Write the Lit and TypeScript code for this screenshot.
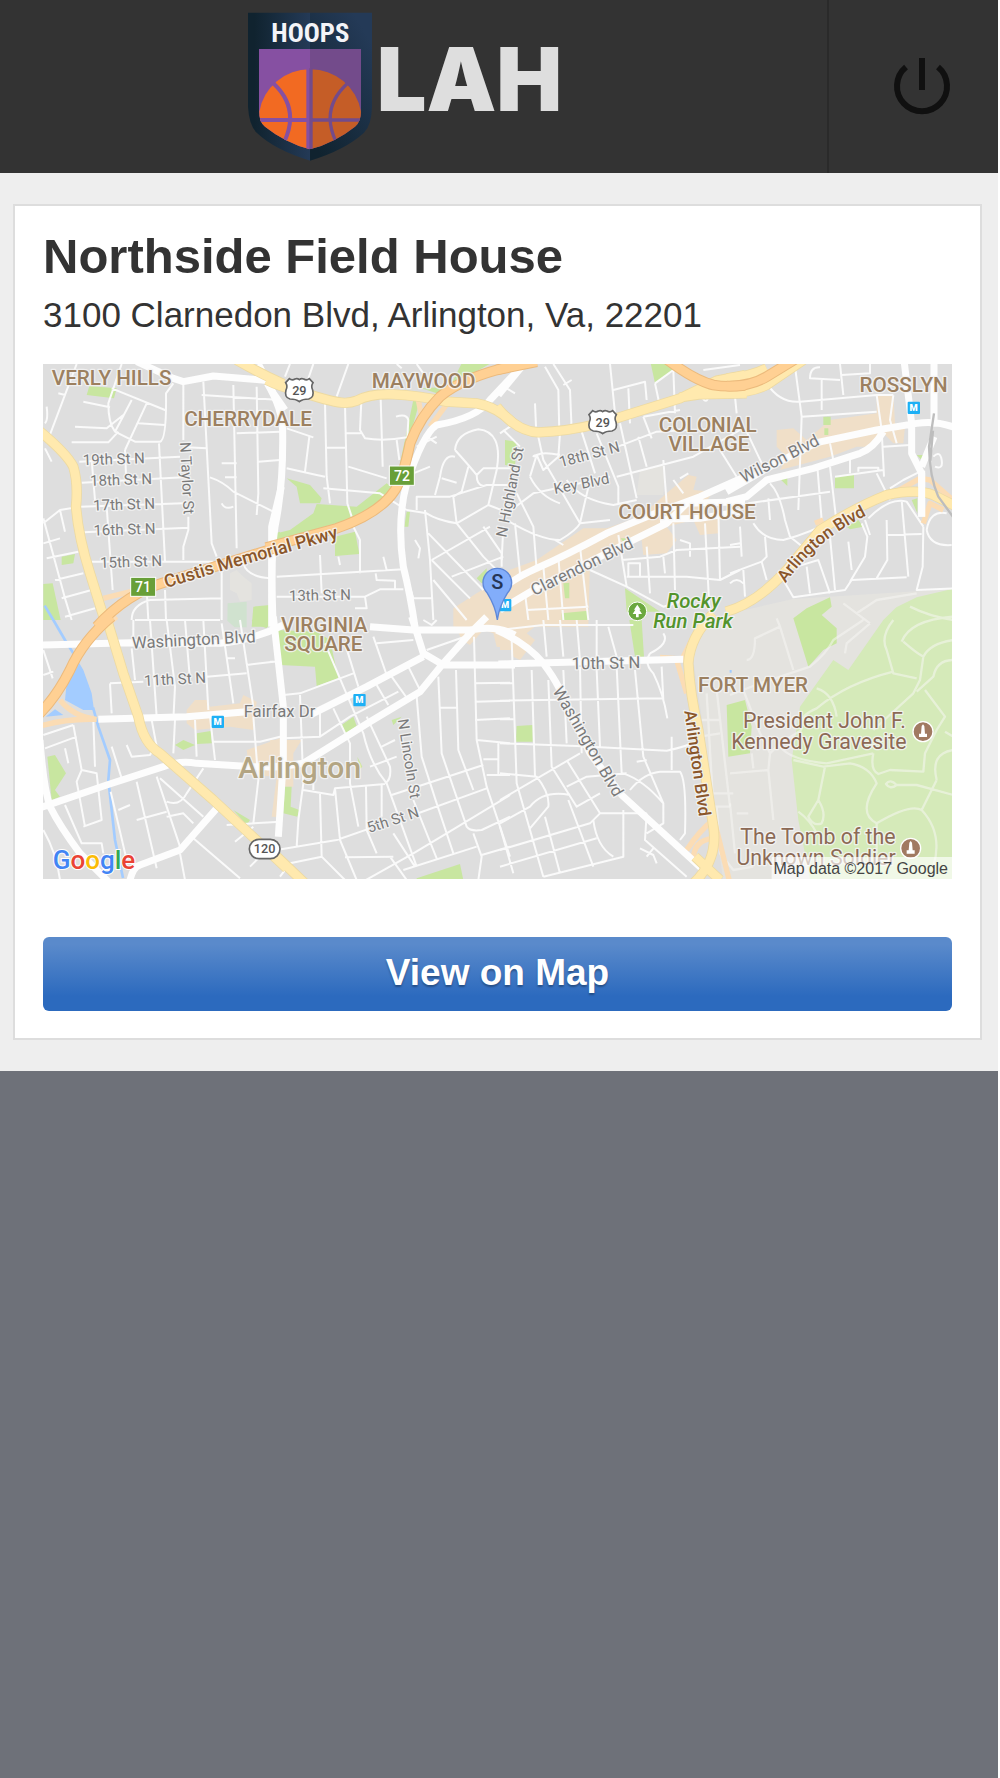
import { LitElement, html, css, svg } from "lit";
import { customElement } from "lit/decorators.js";

interface Tile {
  x: number;
  y: number;
  land?: string;
  shops?: string;
  green?: string;
  minor: string;
  medium?: string;
  ramp?: string;
  yellow?: string;
  orange?: string;
  trail?: string;
}

// The map is drawn as a grid of tiles on a 2727 x 1545 canvas.
const TILES: Tile[] = [
  {
    x: -9, y: -12,
    land: "M570,640 L590,630 L610,650 L635,670 V720 L600,725 L590,700 L570,690Z",
    green: "M148,78 L230,85 L222,115 L140,105Z M65,590 L105,582 L100,610 L65,615Z M10,672 L38,670 L62,780 L10,780Z M640,740 L690,735 V800 H635Z M708,520 l12,-5 v30 h-12Z",
    minor: "M20,250 L110,12 M130,125 L210,142 M245,12 L205,130 Q205,190 225,215 L285,245 L360,245 Q380,240 378,100 L400,70 M215,85 L375,150 M225,215 L275,120 M105,200 L200,205 L250,165 M95,247 L205,247 L235,215 M255,270 L320,130 M295,190 L375,195 M357,250 L375,605 M255,270 L258,345 M118,305 L420,290 M125,368 L430,352 M120,440 L430,430 M130,517 L445,503 M150,605 L520,605 M155,300 L165,420 M200,440 L218,690 M430,75 L430,240 M490,65 L515,550 L530,590 M580,75 L590,565 M650,80 L655,400 L650,465 M485,105 L720,120 M440,262 L500,265 M590,220 L720,215 M655,305 L720,300 M545,310 H590 M555,352 H590 M510,352 Q550,365 580,395 L700,455 M445,470 V510 L430,560 V600 M545,605 V780 M330,720 L545,715 M275,780 Q275,735 330,720 M10,490 L60,450 L120,440 M10,475 L75,715 L95,780 M60,450 L75,515 M10,550 L60,535 M20,595 L115,575 M45,660 L130,640 M65,715 L155,690 M75,770 L165,745 M15,190 Q25,180 20,140 M15,265 L35,305 M320,690 L325,780 M375,690 L378,780 M545,430 Q555,450 580,440 M610,610 Q620,650 690,655 M55,100 l20,5",
    medium: "M655,12 Q680,60 700,100 L735,150 M290,5 L400,55 L430,65 L520,48 L690,62 M724,380 L695,500 V800",
    ramp: "M190,715 L290,690 M200,780 L290,705",
    yellow: "M-5,210 Q80,280 100,320 Q115,370 108,440 Q115,530 150,640 L200,800 M590,0 Q660,40 730,72",
    orange: "M170,800 Q260,700 380,665 L740,553",
  },
  {
    x: 681, y: -12,
    shops: "M550,745 L620,700 L720,640 V800 H550Z",
    green: "M50,355 L120,375 L155,415 L150,430 L90,430 L80,380Z M20,520 L60,510 L130,460 L140,432 L260,440 L350,370 L370,385 Q320,460 200,490 L20,540Z M195,530 L255,515 L268,582 L195,588Z M430,120 L450,120 L400,300 L390,310Z M455,85 L540,80 L580,0 H680 L600,45 L500,100Z M410,455 H420 L415,500 H403Z M620,655 L650,625 V660 L635,670Z M705,245 h15 v70 h-15Z",
    minor: "M60,12 L45,50 M130,12 L110,70 M235,12 L200,110 M380,12 L395,25 M440,12 L460,40 M165,130 L170,350 L180,430 M225,135 L232,430 L245,470 M275,100 L270,210 L285,235 Q340,245 412,232 L415,180 Q410,160 378,170 M380,240 L388,300 M332,115 L338,320 M170,263 H225 M228,220 H272 M50,205 L130,232 M118,230 L105,335 M50,325 L140,345 L165,350 M235,320 L350,355 M160,385 L330,400 L410,450 M250,500 L270,540 V640 M20,650 L400,628 M150,585 L155,700 M205,590 L210,615 M317,640 L320,660 L375,662 V690 M20,710 H285 L330,688 H400 M285,710 L290,745 H255 M340,590 L350,630 M440,450 V410 H540 L650,375 H720 M555,270 Q560,220 625,208 Q700,215 680,330 L655,435 L560,490 Q500,480 470,460 L410,450 M555,270 Q600,320 620,345 L640,325 H720 M555,290 Q520,280 510,350 L495,405 M595,320 L575,395 L550,410 L560,490 M515,355 L560,368 M620,345 Q620,375 640,378 M440,260 L500,230 M470,230 l30,20 M430,340 L480,320 M465,450 L480,600 L490,780 M475,520 L640,690 M485,600 L600,715 M490,660 L590,780 M560,490 L640,590 L690,640 M485,600 L660,500 M545,650 L700,590 M640,500 L695,580 V620 M435,540 l15,25 l-5,30 M410,650 L430,715 H485 M655,435 L720,460 M690,220 L720,200",
    medium: "M-8,70 Q40,150 38,220 Q40,380 15,500 Q0,600 10,800 M735,40 L660,120 Q620,175 500,195 Q460,220 410,370 Q380,480 400,620 Q420,700 435,800",
    ramp: "M445,120 L455,170 M540,120 L480,200",
    yellow: "M-10,60 Q30,80 75,90 Q180,125 215,128 Q240,130 260,122 Q300,100 370,103 Q440,105 530,125 L620,130 Q680,140 730,190",
    orange: "M-12,563 L200,505 Q330,460 375,390 Q400,350 420,250 Q450,170 510,110 Q580,50 740,15",
  },
  {
    x: 1371, y: -12,
    land: "M420,330 L495,315 L490,405 L410,405Z",
    shops: "M0,640 L110,600 L250,505 L320,505 L420,470 L500,400 L565,345 L590,350 L580,390 L640,395 L600,450 L660,470 L655,520 L600,525 L580,480 L500,500 L530,540 L500,580 L430,585 L425,540 L270,600 L265,800 H0Z",
    green: "M15,240 L50,245 L45,320 L15,315Z M450,0 H525 L515,35 L465,70Z M375,685 L480,755 H380Z M190,670 L208,668 V715 H195Z M185,760 L265,752 V780 H185Z M362,535 h18 l-8,15Z",
    minor: "M135,20 L175,90 L178,220 M160,12 L210,90 L215,210 M330,12 L345,160 M340,90 L435,65 L440,120 M385,85 L390,190 M105,130 L108,200 M465,70 L480,140 M465,70 L520,30 M520,30 L525,160 M190,75 L215,60 M20,85 L45,100 M115,230 L130,300 L240,490 M180,220 L175,290 L130,330 L110,285 Q90,290 110,290 M245,215 L285,340 M290,220 L355,380 V430 M360,190 L410,415 M415,230 L440,320 M430,170 L455,235 M430,170 L540,150 M340,265 L470,215 L560,210 M350,350 L580,290 L720,210 M20,460 L100,400 L330,350 M20,480 Q120,540 180,540 Q230,510 240,490 L330,480 M90,350 Q120,410 180,430 M90,350 L110,285 Q130,275 180,285 M270,360 L240,490 M200,360 Q240,420 340,435 L410,420 M50,400 L100,500 L110,630 M45,490 L60,640 M165,540 L190,555 M5,600 L10,500 M130,620 L145,780 M175,590 L190,780 M240,560 L265,780 M270,630 L380,680 L490,740 L560,720 M355,525 L380,680 M80,750 L265,740 M75,700 L85,780 M365,600 L480,590 L530,570 L720,560 M380,650 H560 L660,660 L720,630 M440,560 L450,700 M520,490 L525,690 M615,490 L630,780 M655,450 L660,660 M490,300 L500,430 M520,360 l30,40 M540,355 l25,-15 M660,270 L710,350 M540,540 l30,10 v40 M385,610 h35 v40 h-35Z M610,30 L720,15 M605,110 q15,25 20,0 M10,210 L60,260 M490,590 L495,640",
    medium: "M-5,105 L65,20 M-10,700 Q40,655 110,625 Q200,585 320,520 L440,470 L600,410 L735,350 M0,750 L100,690 L390,545 L500,490 L560,430 L735,425 M480,478 L600,475 L720,455",
    yellow: "M-10,140 Q50,215 115,217 Q200,215 300,190 L540,115 L650,62 L735,45 M540,112 L600,103 L740,100",
    orange: "M490,-10 Q580,60 640,75 Q680,82 735,76 M-10,30 L110,5",
  },
  {
    x: 2061, y: -12,
    shops: "M140,210 L190,205 L230,240 L300,180 L440,160 V105 H490 L495,190 L525,200 L520,250 H490 L460,220 L430,260 H380 L300,290 L150,330 L170,290 L140,260Z",
    green: "M280,170h22v25h-22Z M283,205h12v20h-12Z M315,348 L372,345 V385 H315Z M145,352 L172,348 V378Z M350,500 L385,480 L400,500 L360,508Z M560,285 h30 l-15,15Z M545,420 L562,415 V460Z",
    minor: "M110,70 Q150,130 210,125 L440,105 H490 M195,20 L215,170 L205,450 M330,12 L340,105 M270,22 Q240,20 240,55 L330,60 M335,45 L420,40 V12 M275,60 V150 M215,170 L440,155 M440,105 L455,210 L462,350 M490,105 L480,180 L500,250 M300,250 L310,300 M262,320 L275,480 M300,320 L320,490 M460,260 L540,255 M360,290 V340 M315,350 L460,330 M385,335 v-12 h60 v12 M120,370 Q150,400 165,480 L180,530 M55,430 L300,395 M50,215 L100,320 M15,110 L20,160 M115,415 L120,480 M70,490 Q100,540 160,540 Q240,520 330,470 M415,475 Q480,410 530,425 L580,500 M0,555 L30,550 M30,500 L35,590 M105,530 L110,590 L95,605 L0,640 M40,630 L45,710 M95,605 L110,660 M0,670 Q20,650 40,670 M180,530 L230,570 M160,660 L190,712 L345,690 L365,660 L530,652 M230,620 L240,700 M200,620 L265,600 L300,700 M300,530 L315,690 M355,545 L365,630 M395,490 L412,530 L405,590 L360,665 M470,525 L575,522 M470,480 L472,600 L440,655 M515,420 L535,650 M580,500 L578,620 L560,690 L670,685 M405,480 L420,525 M590,510 Q600,450 650,460 M590,510 Q600,560 665,555 M610,290 q20,-20 25,10 t-20,20 M440,340 L480,420 M570,335 L520,360 L480,385",
    medium: "M-10,395 L120,320 L260,248 L440,210 L560,190 Q620,180 680,205 M-10,425 L50,410 L110,360 L250,325 L390,280 Q430,265 460,215 M522,0 L545,190 V280 L575,340 V470 M612,0 V200 M612,230 L575,320",
    ramp: "M490,400 L570,355 L600,360 L680,430 M580,490 L600,430 L640,450 M255,490 L280,480",
    yellow: "M-12,755 Q80,730 170,630 L270,510 Q380,440 470,405 Q560,385 610,405 L680,440 M-10,98 Q60,100 110,75 L220,0 M-10,55 Q60,50 110,25",
    orange: "M-10,78 Q60,80 110,50 L200,-5",
  },
  {
    x: -9, y: 768,
    shops: "M465,240 H500 L510,260 L600,250 L610,225 L650,245 L640,330 L570,320 L465,330 L440,310 V270Z M620,390 L720,355 V590 H700 L715,470 L630,465Z",
    green: "M22,410 L45,405 L78,460 L45,510 L60,530 L35,540Z M405,375 L430,360 L465,375 L430,390Z M470,340 L512,333 L515,370 L470,372Z M580,570 L630,600 L620,615Z M635,0 H690 L680,25 L640,10Z",
    minor: "M10,90 L38,175 M15,385 L110,350 M10,345 L100,315 M100,315 L125,450 L110,485 L135,620 M125,450 L170,460 L185,600 L130,620 M75,385 L85,430 M75,555 L125,670 H185 L190,700 M10,630 Q50,700 60,780 M212,515 L260,720 M215,380 L245,475 M260,375 L275,410 L330,405 L350,370 M290,485 L350,745 M350,470 L420,680 M360,475 L490,590 M235,570 L270,555 M290,600 L380,575 M380,545 Q420,560 440,520 L490,445 M380,590 L430,580 L460,610 M420,700 L435,780 M460,655 L600,775 M275,85 L285,180 M280,0 V50 M330,0 L350,290 M380,0 L405,200 L400,300 M435,0 L450,180 M490,0 L505,270 M545,10 L580,250 M600,0 L640,260 M285,0 H540 M210,190 L310,185 M500,170 L620,160 M620,135 L700,125 M560,115 h25 M210,190 L215,280 M335,300 L350,380 M405,300 L400,400 M465,300 L470,410 M510,290 L525,420 M520,365 H660 L720,350 M640,290 L655,480 L640,610 M560,615 L720,605 M585,665 L640,620 M630,740 L680,690 M10,165 L40,155 M160,300 L165,440",
    medium: "M0,75 L270,68 L540,70 Q640,60 730,15 M175,298 L440,290 L620,275 M-5,565 L200,495 L370,440 Q420,420 470,430 L640,440 H720 M0,360 Q10,500 30,560 Q60,620 120,700 L210,790 M270,780 Q280,740 300,735 L420,690 L530,565",
    ramp: "M60,240 Q100,290 170,298 M0,318 Q80,295 170,298 M200,15 L230,-10",
    yellow: "M195,-20 L250,160 L295,290 Q310,370 360,400 L520,540 L740,745",
    orange: "M-5,285 Q50,230 90,150 Q130,60 215,-10",
  },
  {
    x: 681, y: 768,
    shops: "M0,360 H95 L70,400 V500 H45 L20,590 H5 L20,470 H0Z M550,0 H720 V85 L680,80 L670,40 L640,30 L600,75 L575,60Z",
    green: "M20,30 L140,35 L180,60 L205,175 L140,198 L135,140 L30,135Z M215,315 L250,290 L260,318 L225,342Z M365,300 L395,290 L370,315Z M45,500 H65 L62,560 L88,570 L82,590 L40,580Z M440,775 L570,732 L580,780 H440Z M262,410 l15,30 l-8,8Z",
    minor: "M165,70 L280,340 Q300,430 350,490 L440,740 M225,70 L265,200 M190,265 L240,370 V490 L265,620 M290,290 L360,440 Q365,480 345,490 M320,195 L355,255 M365,170 L415,240 M415,140 L450,210 M310,50 L350,165 M320,70 L430,60 M40,225 L90,220 L250,160 M90,225 L100,490 L85,600 L80,680 M40,355 L150,350 L240,290 L385,215 M150,270 V350 M100,510 L190,525 L195,505 L345,492 M130,490 v20 M150,520 L155,710 L225,780 M195,505 L210,660 L260,780 M288,500 L290,630 L320,700 M335,490 V590 M20,690 L200,660 L300,625 M155,710 L60,730 L30,770 M225,712 L370,710 M300,440 L380,410 M335,380 L375,360 M365,525 L640,435 M430,585 L650,505 M270,790 L430,700 L530,640 L720,525 M400,750 L620,680 M370,640 L435,740 M440,230 L455,410 L500,550 L550,700 M430,540 L500,715 M505,170 L515,400 L590,620 Q600,635 635,630 L720,590 M558,150 L565,390 L610,510 M612,50 L620,360 L650,500 L690,620 L720,710 M510,263 H560 M615,190 L720,188 M615,245 L720,242 M615,300 L720,295 M620,360 L720,370 M685,365 V465 M640,418 h45 M650,465 H720 M610,640 L635,710 L625,780 M635,705 L720,680 M470,90 L600,45 M460,0 L485,15 L500,0 M0,125 h15 M360,710 L410,780",
    medium: "M10,-10 L40,260 V420 L25,650 M300,20 L430,30 H600 Q680,15 735,45 M425,-10 L460,100 L520,135 H735 M120,285 L290,200 L460,110 M100,430 L300,305 L450,215 L520,130 L600,40 L650,-10 M-10,440 H30 L100,430",
    yellow: "M10,700 L110,795",
  },
  {
    x: 1371, y: 768,
    shops: "M0,0 H130 L80,40 L105,60 L60,120 L40,110 L38,90 H0Z",
    green: "M388,0 H425 L432,110 H405Z M50,318 L98,315 V365 H48Z",
    minor: "M35,60 L50,490 L130,770 M95,150 L105,470 M145,180 L155,440 L230,560 L300,520 M190,150 L200,370 M240,140 L245,400 M290,150 L300,380 M350,140 L365,460 M405,150 L430,410 L490,550 V610 L440,640 M0,190 h40 M0,242 L490,235 M0,298 h40 M0,370 L230,378 L500,392 Q560,380 600,360 M485,140 L490,240 M450,100 q-20,30 10,60 Q490,220 502,295 M490,40 q20,30 -40,60 M130,0 L140,110 M180,0 L190,110 M230,0 L240,120 M290,0 V110 M325,20 L350,110 M0,30 L130,15 H400 M0,540 L240,400 M0,610 L90,560 Q130,510 210,525 M0,460 L110,470 Q150,520 145,560 L90,625 M200,420 L300,580 M200,500 L260,470 L380,460 M0,620 L40,760 M0,690 L270,610 L300,580 H440 M135,590 L180,760 M205,540 L280,740 M280,600 Q290,680 340,710 M0,740 L290,655 M130,770 L370,710 V570 M440,580 L435,660 L560,770 M370,460 Q430,480 490,550 M390,510 Q430,460 480,455 H540 Q560,480 555,640 L540,660 M515,350 V450 M410,425 L440,420 M420,685 l40,20 l10,25 M440,710 l20,-25",
    medium: "M-5,132 L550,118 M-10,30 Q80,70 130,130 Q160,170 175,200 L270,400 L365,525 L605,745",
    ramp: "M480,112 L560,118 M530,120 L560,220 M545,120 L580,50 M560,690 Q600,630 640,600 M640,590 L690,790 M580,720 Q580,660 640,655",
    yellow: "M640,-20 Q570,50 565,130 Q570,220 595,330 L640,620 Q655,720 580,790 M585,710 L660,780",
    trail: "M600,350 L660,340 M620,220 L640,560 M650,210 L690,560 M605,300 H660 M640,520 H700 M650,560 L660,700 L700,750 L760,740 M640,560 H690",
  },
  {
    x: 2061, y: 768,
    green: "M190,-5 L230,-35 L300,-68 L305,-40 L275,-15 L320,25 V70 L280,90 L235,140Z M-10,255 L45,240 L65,320 L60,400 L-5,410Z",
    minor: "",
    trail: "M50,120 Q75,120 75,55 L150,20 L190,150 M40,210 L90,340 L120,400 M0,225 L90,190 L240,140 Q290,100 310,60 L400,0 M345,100 L350,70 L420,10 M150,20 L140,-5 M0,460 L115,450 L120,400 L150,370 L215,330 M115,450 L130,600 M0,550 L15,700 M20,580 H55 M65,400 L70,445 M490,0 Q450,50 470,90 L490,160 L560,175 M490,155 Q350,190 260,265 Q200,290 215,330 M540,-40 Q600,-10 670,0 M520,65 Q560,100 580,110 L570,180 L550,220 L430,330 M515,65 Q540,0 670,-10 M580,110 Q600,70 670,60 M670,120 Q620,120 610,170 L560,215 M585,210 L645,290 L620,330 L585,400 L580,455 L480,450 L445,462 Q420,450 430,400 M645,335 L670,350 M620,480 Q600,400 670,390 M620,480 L575,570 Q540,550 440,610 Q380,580 440,490 Q420,440 360,430 L280,440 L190,420 M285,440 L265,540 L235,590 Q250,620 275,610 Q290,580 265,540 M575,570 Q640,640 610,740 M500,495 Q480,475 468,492 Q480,510 500,495 L560,495 L670,525 M320,290 Q310,220 260,205 M440,610 V700 M150,380 Q180,420 290,430 L430,400 M205,575 Q240,600 260,640 M340,-50 L420,10 M380,-20 L440,-60 L560,-80",
  },
];

interface Street {
  text: string;
  x: number;
  y: number;
  angle: number;
  kind?: string;
}

const STREETS: Street[] = [
  { text: "19th St N", x: 120, y: 304, angle: -2 },
  { text: "18th St N", x: 142, y: 366, angle: -2 },
  { text: "17th St N", x: 151, y: 440, angle: -2 },
  { text: "16th St N", x: 152, y: 515, angle: -2 },
  { text: "15th St N", x: 172, y: 612, angle: -2 },
  { text: "13th St N", x: 738, y: 711, angle: -1 },
  { text: "11th St N", x: 304, y: 966, angle: -3 },
  { text: "10th St N", x: 1586, y: 916, angle: -1, kind: "big" },
  { text: "Washington Blvd", x: 268, y: 854, angle: -3, kind: "big" },
  { text: "Fairfax Dr", x: 602, y: 1060, angle: 0, kind: "big" },
  { text: "5th St N", x: 978, y: 1407, angle: -18 },
  { text: "18th St N", x: 1553, y: 310, angle: -15 },
  { text: "Key Blvd", x: 1535, y: 390, angle: -11 },
  { text: "Clarendon Blvd", x: 1474, y: 696, angle: -26, kind: "big" },
  { text: "Wilson Blvd", x: 2102, y: 358, angle: -27, kind: "big" },
  { text: "N Taylor St", x: 411, y: 235, angle: 87 },
  { text: "N Highland St", x: 1390, y: 522, angle: -79 },
  { text: "N Lincoln St", x: 1064, y: 1067, angle: 81 },
  { text: "Washington Blvd", x: 1528, y: 980, angle: 60, kind: "big" },
  { text: "Arlington Blvd", x: 1924, y: 1041, angle: 82, kind: "major" },
];

const DISTRICTS: [string, number, number][] = [
  ["VERLY HILLS", 206, 63],
  ["CHERRYDALE", 615, 185],
  ["MAYWOOD", 1142, 72],
  ["COLONIAL", 1994, 204],
  ["VILLAGE", 1998, 262],
  ["ROSSLYN", 2582, 85],
  ["COURT HOUSE", 1932, 466],
  ["VIRGINIA", 844, 803],
  ["SQUARE", 841, 862],
  ["FORT MYER", 2130, 983],
];

const METROS: [number, number][] = [[2594, 113], [506, 1055], [931, 990], [1368, 705]];

type Layer = Exclude<keyof Tile, "x" | "y">;

@customElement("venue-map")
export class VenueMap extends LitElement {
  static styles = css`
    :host { display: block; }
    .map { display: block; width: 100%; height: auto; font-family: Roboto, "Liberation Sans", sans-serif; }
    .road { fill: none; stroke-linejoin: round; stroke-linecap: butt; }
    .land { fill: #e4e3df; }
    .shops { fill: #f0dfc8; }
    .green { fill: #c8e6a0; }
    .lawn { fill: #d5eab9; }
    .water { fill: #a3ccff; }
    .river { stroke: #a3ccff; stroke-width: 8; }
    .minor { stroke: #fafafa; stroke-width: 6; }
    .trail { stroke: #f6f6f2; stroke-width: 7; stroke-opacity: 0.55; }
    .medium { stroke: #fdfdfd; stroke-width: 21; }
    .ramp { stroke: #fbdcb4; stroke-width: 16; }
    .yellow-edge { stroke: #eddaa2; stroke-width: 31; }
    .yellow { stroke: #ffe9ae; stroke-width: 26; }
    .orange-edge { stroke: #ecba7c; stroke-width: 32; }
    .orange { stroke: #ffd093; stroke-width: 26; }
    .rail { stroke: #bdbdbd; stroke-width: 7; }
    .label { paint-order: stroke; stroke: #f4f4f4; stroke-width: 8; stroke-linejoin: round; stroke-opacity: 0.85; }
    .district { font-size: 62px; font-weight: 500; fill: #9c8060; text-anchor: middle; }
    .city { font-size: 90px; font-weight: 500; fill: #b3a583; text-anchor: middle; }
    .street { font-size: 45px; fill: #7a7a7a; }
    .big { font-size: 50px; }
    .major { font-size: 51px; font-weight: 500; fill: #8a562a; }
    .parkway { font-size: 54px; }
    .park { font-size: 61px; font-style: italic; font-weight: 500; fill: #53942c; text-anchor: middle; }
    .poi { font-size: 64px; fill: #8c6a55; text-anchor: end; }
    .sign { font-size: 38px; font-weight: 500; text-anchor: middle; fill: #555; }
    .exit { font-size: 42px; fill: #fff; }
    .metro { font-size: 28px; font-weight: 900; text-anchor: middle; fill: #fff; }
    .pin { font-size: 60px; font-weight: 500; text-anchor: middle; fill: #263556; }
    .credit { font-family: "Liberation Sans", Arial, sans-serif; font-size: 48px; text-anchor: end; fill: #444; }
    .google { font-size: 78px; font-weight: 500; paint-order: stroke; stroke: #fff; stroke-width: 6; }
    .g-blue { fill: #4285f4; }
    .g-red { fill: #ea4335; }
    .g-yellow { fill: #fbbc05; }
    .g-green { fill: #34a853; }
  `;

  private layer(name: Layer, cls: string) {
    return TILES.filter((t) => t[name]).map(
      (t) => svg`<path class=${cls} d=${t[name] as string} transform="translate(${t.x} ${t.y})"></path>`
    );
  }

  private shield(x: number, y: number) {
    return svg`<g transform="translate(${x} ${y})">
      <path d="M-30,-34 Q-22,-27 -13,-33 Q-6,-36 0,-31 Q6,-36 13,-33 Q22,-27 30,-34 L41,-22 Q34,-12 40,0 Q46,22 28,27 Q10,27 0,35 Q-10,27 -28,27 Q-46,22 -40,0 Q-34,-12 -41,-22Z" fill="#fff" stroke="#666" stroke-width="5"></path>
      <text class="sign" y="16">29</text></g>`;
  }

  private monument(x: number, y: number) {
    return svg`<g transform="translate(${x} ${y})">
      <circle r="30" fill="#a17a62" stroke="#fff" stroke-width="4"></circle>
      <path d="M-4,-17 L0,-22 L4,-17 L6,6 H12 V16 H-12 V6 H-6Z" fill="#fff"></path></g>`;
  }

  render() {
    return html`<svg class="map" viewBox="0 0 2727 1545" role="img" aria-label="Map of Arlington">
      <rect width="2727" height="1545" fill="#dedede"></rect>
      <path class="land" d="M2075,745 L2250,705 L2727,675 V1545 H2040 L2020,1400 L1975,1050 L1950,880 L1990,780Z"></path>
      <path class="lawn" d="M2521,768 L2560,730 L2621,700 L2727,675 V1545 H2301 L2266,1368 L2246,1188 L2271,1028 L2371,888 L2416,918Z"></path>
      <path d="M554,718 L611,713 V790 H575 L553,770Z" fill="#d0e2cf"></path>
      ${this.layer("land", "land")}
      ${this.layer("shops", "shops")}
      ${this.layer("green", "green")}
      <path class="water" d="M91,868 L121,918 L146,988 L153,1038 H121 L66,1008 Q71,938 91,868Z M8,1058 L36,1036 L61,1053Z"></path>
      <path class="road river" d="M5,725 L31,768 L66,828 L91,868 M150,1030 L166,1088 L201,1188 L196,1248 L216,1428 L240,1542 M1300,25 L1425,-5 M2060,922 h6"></path>
      ${this.layer("trail", "road trail")}
      ${this.layer("minor", "road minor")}
      ${this.layer("ramp", "road ramp")}
      ${this.layer("medium", "road medium")}
      ${this.layer("yellow", "road yellow-edge")}
      ${this.layer("yellow", "road yellow")}
      ${this.layer("orange", "road orange-edge")}
      ${this.layer("orange", "road orange")}
      <path class="road medium" d="M2636,320 V458"></path>
      <path class="road rail" d="M2673,148 L2658,248 Q2660,340 2686,398 L2731,460 M2670,200 L2662,290"></path>

      ${DISTRICTS.map(([t, x, y]) => svg`<text class="label district" x=${x} y=${y}>${t}</text>`)}
      <text class="label city" x="770" y="1241">Arlington</text>
      ${STREETS.map(
        (s) => svg`<text class="label street ${s.kind ?? ""}" transform="translate(${s.x} ${s.y}) rotate(${s.angle})">${s.text}</text>`
      )}
      <path id="custis" d="M370,672 L560,614 L900,518" fill="none"></path>
      <text class="label street major parkway"><textPath href="#custis">Custis Memorial Pkwy</textPath></text>
      <path id="arlington" d="M2228,658 Q2330,510 2520,432" fill="none"></path>
      <text class="label street major"><textPath href="#arlington">Arlington Blvd</textPath></text>
      <text class="label park" x="1952" y="732">Rocky</text>
      <text class="label park" x="1950" y="792">Run Park</text>
      <circle cx="1783" cy="742" r="28" fill="#6ba83f" stroke="#fff" stroke-width="3"></circle>
      <path d="M1783,722 L1793,737 H1789 L1797,750 H1787 V760 H1779 V750 H1769 L1777,737 H1773Z" fill="#fff"></path>
      <text class="label poi" x="2589" y="1091">President John F.</text>
      <text class="label poi" x="2591" y="1154">Kennedy Gravesite</text>
      <text class="label poi" x="2558" y="1440">The Tomb of the</text>
      <text class="label poi" x="2558" y="1504">Unknown Soldier</text>
      ${this.monument(2640, 1103)}
      ${this.monument(2603, 1453)}

      ${this.shield(769, 78)}
      ${this.shield(1679, 174)}
      <rect x="1039" y="306" width="75" height="58" fill="#689f38" stroke="#fff" stroke-width="3"></rect>
      <text class="sign exit" x="1077" y="350">72</text>
      <rect x="263" y="640" width="75" height="57" fill="#689f38" stroke="#fff" stroke-width="3"></rect>
      <text class="sign exit" x="300" y="684">71</text>
      <rect x="619" y="1426" width="92" height="58" rx="29" fill="#fff" stroke="#666" stroke-width="5"></rect>
      <text class="sign" x="665" y="1468">120</text>
      ${METROS.map(
        ([x, y]) => svg`<rect x=${x} y=${y} width="37" height="37" rx="3" fill="#1eb0f5"></rect>
          <text class="metro" x=${x + 18} y=${y + 28}>M</text>`
      )}

      <path d="M1363,768 Q1358,728 1332,686 A43,43 0 1 1 1394,686 Q1368,728 1363,768Z" fill="#82adfa" stroke="#5f88d8" stroke-width="4"></path>
      <text class="pin" x="1363" y="674">S</text>

      <rect x="2186" y="1479" width="541" height="66" fill="#fff" fill-opacity="0.65"></rect>
      <text class="credit" x="2715" y="1529">Map data ©2017 Google</text>
      <text class="google" x="29" y="1516"><tspan class="g-blue">G</tspan><tspan class="g-red">o</tspan><tspan class="g-yellow">o</tspan><tspan class="g-blue">g</tspan><tspan class="g-green">l</tspan><tspan class="g-red">e</tspan></text>
    </svg>`;
  }
}

@customElement("app-root")
export class AppRoot extends LitElement {
  static styles = css`
    :host {
      display: block;
      min-height: 100vh;
      box-sizing: border-box;
      background: #6e7179;
      border-right: 2px solid #fff;
      font-family: "Liberation Sans", Arial, sans-serif;
      color: #333;
    }
    .bar { display: flex; height: 173px; background: #333; }
    .brand {
      flex: 1;
      display: flex;
      justify-content: center;
      align-items: flex-start;
      gap: 4px;
      padding: 12px 18px 0 0;
      color: #dedede;
      text-decoration: none;
    }
    .crest { display: block; width: 126px; height: 150px; }
    .crest-name { font-family: "Liberation Sans Narrow", "Roboto Condensed", "Liberation Sans", sans-serif; font-weight: 700; font-size: 80px; fill: #f4f4f8; text-anchor: middle; }
    .team { font-family: Inter, "Liberation Sans", sans-serif; font-weight: 900; font-size: 88px; line-height: 134px; }
    .power {
      width: 171px;
      border: 0;
      border-left: 2px solid #2a2a2a;
      padding: 0 0 0 16px;
      display: flex;
      align-items: center;
      justify-content: center;
      background: none;
      cursor: pointer;
    }
    .power-icon { display: block; width: 60px; height: 60px; }
    .page { background: #eee; padding: 31px 16px 31px 13px; }
    .card { background: #fff; border: 2px solid #ddd; padding: 22px 28px 27px; }
    .name { margin: 0 0 11px; font-size: 49px; line-height: 56px; font-weight: 700; }
    .address { margin: 0 0 29px; font-size: 35px; line-height: 40px; }
    .view {
      display: block;
      margin-top: 58px;
      border-radius: 6px;
      padding: 0 16px 2px;
      text-align: center;
      color: #fff;
      font-size: 37px;
      font-weight: 700;
      line-height: 72px;
      text-decoration: none;
      text-shadow: 0 2px 2px rgba(0, 0, 0, 0.3);
      background: linear-gradient(#5a8acb 10%, #2c6abe 80%);
    }
  `;

  render() {
    return html`
      <header class="bar">
        <a class="brand" href="#home">
          <svg class="crest" viewBox="46 36 378 450" aria-hidden="true">
            <defs>
              <linearGradient id="left"><stop offset="0.1" stop-color="#10232f"></stop><stop offset="1" stop-color="#243a57"></stop></linearGradient>
              <linearGradient id="right" x1="0" y1="1" x2="0.7" y2="0"><stop offset="0.1" stop-color="#10232f"></stop><stop offset="1" stop-color="#243a57"></stop></linearGradient>
              <clipPath id="inner"><path d="M82,147 H388 V335 Q388,365 370,380 Q310,428 235,448 Q160,428 100,380 Q82,365 82,335Z"></path></clipPath>
            </defs>
            <path d="M49,38 H236 V482 Q130,450 75,398 Q52,375 49,320Z" fill="url(#left)"></path>
            <path d="M235,38 H421 V320 Q420,375 397,398 Q340,450 235,482Z" fill="url(#right)"></path>
            <g clip-path="url(#inner)">
              <rect x="82" y="147" width="153" height="310" fill="#8650a2"></rect>
              <rect x="235" y="147" width="153" height="310" fill="#734b8b"></rect>
              <path d="M235,208 A153,153 0 0 0 83,335 V460 H235Z" fill="#f26a22"></path>
              <path d="M235,208 A153,153 0 0 1 388,335 V460 H235Z" fill="#c55d27"></path>
              <path d="M82,360 H235 M125,250 Q205,325 158,425 M230,205 V455" fill="none" stroke="#8650a2" stroke-width="12"></path>
              <path d="M235,360 H388 M348,250 Q265,325 313,425 M238,205 V455" fill="none" stroke="#734b8b" stroke-width="10"></path>
            </g>
            <text class="crest-name" x="236" y="126">HOOPS</text>
          </svg>
          <span class="team">LAH</span>
        </a>
        <button class="power" type="button" aria-label="Log out">
          <svg class="power-icon" viewBox="-30 -30 60 60" aria-hidden="true">
            <path d="M-16,-20 A25,25 0 1 0 16,-20 M0,-29 V3" fill="none" stroke="#101010" stroke-width="6"></path>
          </svg>
        </button>
      </header>
      <main class="page">
        <section class="card">
          <h1 class="name">Northside Field House</h1>
          <p class="address">3100 Clarnedon Blvd, Arlington, Va, 22201</p>
          <venue-map></venue-map>
          <a class="view" href="#map">View on Map</a>
        </section>
      </main>
    `;
  }
}
